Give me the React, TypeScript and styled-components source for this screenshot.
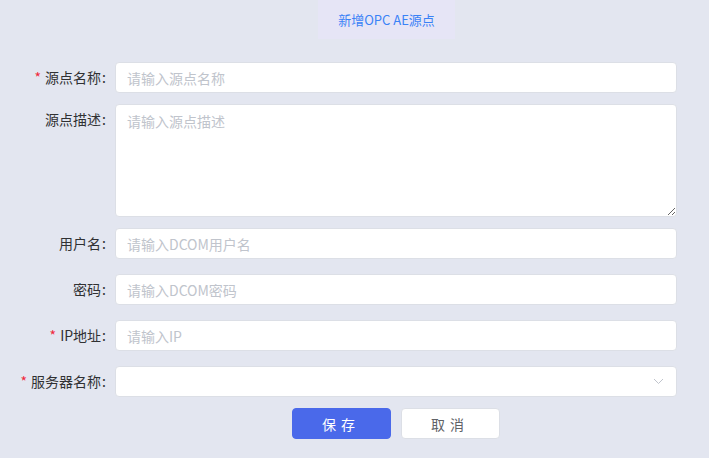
import styled, { createGlobalStyle } from 'styled-components';

const GlobalStyle = createGlobalStyle`
  html, body {
    margin: 0;
    padding: 0;
    background: #e3e6f0;
    font-family: "Noto Sans CJK SC", "Noto Sans", sans-serif;
  }
  * {
    box-sizing: border-box;
  }
`;

const Page = styled.div`
  width: 709px;
  height: 458px;
  background: #e3e6f0;
  overflow: hidden;
`;

const Header = styled.div`
  display: flex;
  height: 39px;
  padding-left: 318px;
`;

const Tab = styled.div`
  width: 137px;
  height: 39px;
  background: #e6e5f6;
  color: #3a82f6;
  font-size: 13px;
  display: flex;
  align-items: center;
  justify-content: center;
`;

const Form = styled.form`
  display: flex;
  flex-direction: column;
  padding: 23px 32px 0 0;
`;

const Row = styled.div<{ $gap: number }>`
  display: flex;
  align-items: flex-start;
  margin-bottom: ${({ $gap }) => $gap}px;
`;

const Label = styled.label`
  width: 115px;
  flex-shrink: 0;
  padding-right: 9px;
  height: 31px;
  line-height: 31px;
  text-align: right;
  font-size: 14px;
  color: #303133;
`;

const Colon = styled.span`
  margin-left: 1px;
`;

const Star = styled.span`
  color: #f0283c;
  margin-right: 4px;
`;

const Input = styled.input`
  flex: 1;
  height: 31px;
  border: 1px solid #dcdfe6;
  border-radius: 4px;
  background: #fff;
  padding: 0 11px;
  font-size: 14px;
  font-family: inherit;
  color: #606266;
  outline: none;

  &::placeholder {
    color: #c0c4cc;
  }
`;

const TextArea = styled.textarea`
  flex: 1;
  height: 113px;
  border: 1px solid #dcdfe6;
  border-radius: 4px;
  background: #fff;
  padding: 5px 11px;
  font-size: 14px;
  line-height: 22px;
  font-family: inherit;
  color: #606266;
  outline: none;
  resize: vertical;
  display: block;

  &::placeholder {
    color: #c0c4cc;
  }
`;

const SelectBox = styled.div`
  flex: 1;
  height: 31px;
  border: 1px solid #dcdfe6;
  border-radius: 4px;
  background: #fff;
  display: flex;
  align-items: center;
  justify-content: flex-end;
  padding-right: 12px;
`;

const Actions = styled.div`
  display: flex;
  justify-content: center;
  gap: 10px;
  margin-left: 115px;
`;

const Button = styled.button<{ $primary?: boolean }>`
  width: 99px;
  height: 31px;
  border-radius: 4px;
  font-size: 14px;
  font-family: inherit;
  letter-spacing: 5px;
  padding-left: 5px;
  cursor: pointer;
  border: 1px solid ${({ $primary }) => ($primary ? '#4a69ea' : '#dcdfe6')};
  background: ${({ $primary }) => ($primary ? '#4a69ea' : '#fff')};
  color: ${({ $primary }) => ($primary ? '#fff' : '#606266')};
`;

const Chevron = () => (
  <svg width="11" height="7" viewBox="0 0 11 7" fill="none">
    <path d="M1 1l4.5 4.5L10 1" stroke="#c0c4cc" strokeWidth="1" />
  </svg>
);

export default function App() {
  return (
    <Page>
      <GlobalStyle />
      <Header>
        <Tab>新增OPC AE源点</Tab>
      </Header>
      <Form>
        <Row $gap={11}>
          <Label>
            <Star>*</Star>源点名称<Colon>:</Colon>
          </Label>
          <Input placeholder="请输入源点名称" />
        </Row>
        <Row $gap={11}>
          <Label>
            源点描述<Colon>:</Colon>
          </Label>
          <TextArea placeholder="请输入源点描述" />
        </Row>
        <Row $gap={15}>
          <Label>
            用户名<Colon>:</Colon>
          </Label>
          <Input placeholder="请输入DCOM用户名" />
        </Row>
        <Row $gap={15}>
          <Label>
            密码<Colon>:</Colon>
          </Label>
          <Input placeholder="请输入DCOM密码" />
        </Row>
        <Row $gap={15}>
          <Label>
            <Star>*</Star>IP地址<Colon>:</Colon>
          </Label>
          <Input placeholder="请输入IP" />
        </Row>
        <Row $gap={11}>
          <Label>
            <Star>*</Star>服务器名称<Colon>:</Colon>
          </Label>
          <SelectBox>
            <Chevron />
          </SelectBox>
        </Row>
        <Actions>
          <Button type="button" $primary>
            保存
          </Button>
          <Button type="button">取消</Button>
        </Actions>
      </Form>
    </Page>
  );
}
